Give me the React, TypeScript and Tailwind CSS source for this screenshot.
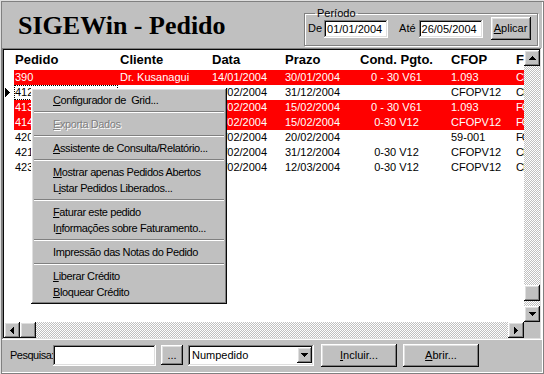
import React from 'react';

type Row = {
  pedido: string;
  cliente: string;
  data: string;
  prazo: string;
  cond: string;
  cfop: string;
  frete: string;
  red: boolean;
};

const rows: Row[] = [
  { pedido: '390', cliente: 'Dr. Kusanagui', data: '14/01/2004', prazo: '30/01/2004', cond: '0 - 30 V61', cfop: '1.093', frete: 'CIF', red: true },
  { pedido: '412', cliente: 'Cliente V12', data: '12/02/2004', prazo: '31/12/2004', cond: '', cfop: 'CFOPV12', frete: 'CIF', red: false },
  { pedido: '413', cliente: 'Dr. Kusanagui', data: '13/02/2004', prazo: '15/02/2004', cond: '0 - 30 V61', cfop: '1.093', frete: 'FOB', red: true },
  { pedido: '414', cliente: 'Cliente V12', data: '14/02/2004', prazo: '15/02/2004', cond: '0-30 V12', cfop: 'CFOPV12', frete: 'FOB', red: true },
  { pedido: '420', cliente: 'Cliente 59', data: '20/02/2004', prazo: '20/02/2004', cond: '', cfop: '59-001', frete: 'FOB', red: false },
  { pedido: '421', cliente: 'Cliente V12', data: '21/02/2004', prazo: '31/12/2004', cond: '0-30 V12', cfop: 'CFOPV12', frete: 'CIF', red: false },
  { pedido: '423', cliente: 'Cliente V12', data: '23/02/2004', prazo: '12/03/2004', cond: '0-30 V12', cfop: 'CFOPV12', frete: 'CIF', red: false },
];

// classic 3D bevels
const raised =
  'shadow-[inset_-1px_-1px_#0a0a0a,inset_1px_1px_#ffffff,inset_-2px_-2px_#808080,inset_2px_2px_#dfdfdf]';
const sunken =
  'shadow-[inset_-1px_-1px_#ffffff,inset_1px_1px_#808080,inset_-2px_-2px_#dfdfdf,inset_2px_2px_#0a0a0a]';
const dither =
  'bg-[image:repeating-conic-gradient(#c0c0c0_0_25%,#ffffff_0_50%)] bg-[length:2px_2px]';

function Arrow({ dir }: { dir: 'up' | 'down' | 'left' | 'right' }) {
  const d = {
    up: 'M3 0h1v1h-1zM2 1h3v1h-3zM1 2h5v1h-5zM0 3h7v1h-7z',
    down: 'M0 0h7v1h-7zM1 1h5v1h-5zM2 2h3v1h-3zM3 3h1v1h-1z',
    left: 'M3 0h1v7h-1zM2 1h1v5h-1zM1 2h1v3h-1zM0 3h1v1h-1z',
    right: 'M0 0h1v7h-1zM1 1h1v5h-1zM2 2h1v3h-1zM3 3h1v1h-1z',
  }[dir];
  const vertical = dir === 'up' || dir === 'down';
  return (
    <svg
      width={vertical ? 7 : 4}
      height={vertical ? 4 : 7}
      viewBox={vertical ? '0 0 7 4' : '0 0 4 7'}
      shapeRendering="crispEdges"
    >
      <path d={d} fill="#000" />
    </svg>
  );
}

function ScrollButton({ dir }: { dir: 'up' | 'down' | 'left' | 'right' }) {
  return (
    <div className={`w-[16px] h-[16px] shrink-0 bg-[#c0c0c0] flex items-center justify-center ${raised}`}>
      <Arrow dir={dir} />
    </div>
  );
}

function Cells({ r, header }: { r?: Row; header?: boolean }) {
  const v = (s: string, k: keyof Row) => (header ? s : (r![k] as string));
  return (
    <>
      <div className="w-[104px] shrink-0 pl-[1px] overflow-hidden whitespace-nowrap">{v('Pedido', 'pedido')}</div>
      <div className="w-[92px] shrink-0 pl-[2px] overflow-hidden whitespace-nowrap">{v('Cliente', 'cliente')}</div>
      <div className="w-[73px] shrink-0 pl-[2px] overflow-hidden whitespace-nowrap">{v('Data', 'data')}</div>
      <div className="w-[74px] shrink-0 pl-[2px] overflow-hidden whitespace-nowrap">{v('Prazo', 'prazo')}</div>
      <div className="w-[79px] shrink-0 text-center overflow-hidden whitespace-nowrap">{v('Cond. Pgto.', 'cond')}</div>
      <div className="w-[78px] shrink-0 pl-[15px] overflow-hidden whitespace-nowrap">{v('CFOP', 'cfop')}</div>
      <div className={`flex-1 pl-[2px] overflow-hidden whitespace-nowrap ${header ? '' : 'tracking-[-1px]'}`}>
        {v('F', 'frete')}
      </div>
    </>
  );
}

function MenuItem({ before = '', u, after, disabled }: { before?: string; u: string; after: string; disabled?: boolean }) {
  return (
    <div
      className={`h-[16px] leading-[16px] pl-[19px] whitespace-pre tracking-[-0.4px] ${
        disabled ? 'text-[#808080] [text-shadow:1px_1px_#ffffff]' : 'text-black'
      }`}
    >
      {before}
      <u>{u}</u>
      {after}
    </div>
  );
}

function Separator() {
  return (
    <div className="h-[8px] flex items-center">
      <div className="w-full border-t border-b border-t-[#808080] border-b-white" />
    </div>
  );
}

export default function App() {
  return (
    <div
      className="relative w-[544px] h-[374px] overflow-hidden bg-[#c0c0c0] p-[2px] flex flex-col font-['Liberation_Sans',Arial,sans-serif] text-[11px] text-black shadow-[inset_1px_1px_#dfdfdf,inset_-1px_-1px_#808080,inset_2px_2px_#808080,inset_-2px_-2px_#ffffff]"
    >
      {/* title + período */}
      <div className="h-[46px] shrink-0 flex items-start">
        <h1 className="pl-[16px] pt-[9px] font-['Liberation_Serif','Times_New_Roman',serif] text-[26px] leading-[30px] font-bold">
          SIGEWin - Pedido
        </h1>
        <fieldset className="ml-auto mr-[4px] mt-[5px] w-[234px] h-[39px] border border-[#808080] shadow-[inset_1px_1px_#ffffff,1px_1px_#ffffff] px-[3px]">
          <legend className="ml-[7px] px-[2px] leading-[13px]">Período</legend>
          <div className="-mt-[3px] flex items-center h-[23px]">
            <span>De</span>
            <div className={`ml-[2px] w-[64px] h-[18px] bg-white pl-[3px] leading-[18px] ${sunken}`}>01/01/2004</div>
            <span className="ml-[11px]">Até</span>
            <div className={`ml-[3px] w-[64px] h-[18px] bg-white pl-[3px] leading-[18px] ${sunken}`}>26/05/2004</div>
            <button className={`ml-[8px] w-[40px] h-[23px] bg-[#c0c0c0] text-center ${raised}`}>
              <u>A</u>plicar
            </button>
          </div>
        </fieldset>
      </div>

      {/* grid */}
      <div className={`h-[292px] shrink-0 p-[2px] flex flex-col ${sunken}`}>
        <div className="flex flex-1 min-h-0">
          <div className="flex-1 bg-white overflow-hidden">
            <div className="flex h-[20px] leading-[20px] text-[13px] font-bold">
              <div className="w-[10px] shrink-0" />
              <div className="flex flex-1 min-w-0">
                <Cells header />
              </div>
            </div>
            {rows.map((r, i) => (
              <div key={r.pedido} className="flex h-[15px] leading-[15px]">
                <div className="w-[10px] shrink-0 flex items-center pl-[1px]">
                  {i === 1 && (
                    <svg width="5" height="9" viewBox="0 0 5 9" shapeRendering="crispEdges">
                      <path d="M0 0h1v9h-1zM1 1h1v7h-1zM2 2h1v5h-1zM3 3h1v3h-1zM4 4h1v1h-1z" fill="#000" />
                    </svg>
                  )}
                </div>
                <div className={`relative flex flex-1 min-w-0 ${r.red ? 'bg-[#ff0000] text-white' : 'text-black'}`}>
                  <Cells r={r} />
                  {i === 1 && (
                    <div className="absolute left-0 top-0 w-[104px] h-[15px] outline-1 outline-dotted outline-black -outline-offset-1" />
                  )}
                </div>
              </div>
            ))}
          </div>
          {/* vertical scrollbar */}
          <div className={`w-[16px] shrink-0 flex flex-col ${dither}`}>
            <ScrollButton dir="up" />
            <div className="h-[219px] shrink-0" />
            <div className={`w-[16px] h-[16px] shrink-0 bg-[#c0c0c0] ${raised}`} />
            <div className="flex-1" />
            <ScrollButton dir="down" />
          </div>
        </div>
        {/* horizontal scrollbar */}
        <div className="h-[16px] shrink-0 flex">
          <div className={`flex-1 flex ${dither}`}>
            <ScrollButton dir="left" />
            <div className={`w-[16px] h-[16px] shrink-0 bg-[#c0c0c0] ${raised}`} />
            <div className="flex-1" />
            <ScrollButton dir="right" />
          </div>
          <div className="w-[16px] bg-[#c0c0c0]" />
        </div>
      </div>

      {/* toolbar */}
      <div className="h-[30px] shrink-0 flex items-center pl-[8px]">
        <span className="w-[43px] shrink-0 tracking-[-0.5px] whitespace-nowrap">Pesquisa:</span>
        <div className={`w-[103px] h-[21px] bg-white ${sunken}`} />
        <button className={`ml-[5px] w-[22px] h-[20px] bg-[#c0c0c0] leading-[14px] ${raised}`}>...</button>
        <div className={`ml-[5px] w-[126px] h-[21px] bg-white flex items-center p-[2px] ${sunken}`}>
          <span className="flex-1 pl-[2px]">Numpedido</span>
          <div className={`w-[15px] h-[16px] bg-[#c0c0c0] flex items-center justify-center ${raised}`}>
            <Arrow dir="down" />
          </div>
        </div>
        <button className={`ml-[7px] w-[76px] h-[23px] bg-[#c0c0c0] ${raised}`}>
          <u>I</u>ncluir...
        </button>
        <button className={`ml-[6px] w-[76px] h-[23px] bg-[#c0c0c0] ${raised}`}>
          <u>A</u>brir...
        </button>
      </div>

      {/* context menu */}
      <div className={`absolute left-[31px] top-[88px] w-[196px] bg-[#c0c0c0] px-[3px] py-[4px] ${raised}`}>
        <MenuItem u="C" after="onfigurador de  Grid..." />
        <Separator />
        <MenuItem u="E" after="xporta Dados" disabled />
        <Separator />
        <MenuItem u="A" after="ssistente de Consulta/Relatório..." />
        <Separator />
        <MenuItem u="M" after="ostrar apenas Pedidos Abertos" />
        <MenuItem before="L" u="i" after="star Pedidos Liberados..." />
        <Separator />
        <MenuItem u="F" after="aturar este pedido" />
        <MenuItem before="I" u="n" after="formações sobre Faturamento..." />
        <Separator />
        <MenuItem u="" after="Impressão das Notas do Pedido" />
        <Separator />
        <MenuItem u="L" after="iberar Crédito" />
        <MenuItem u="B" after="loquear Crédito" />
      </div>
    </div>
  );
}
